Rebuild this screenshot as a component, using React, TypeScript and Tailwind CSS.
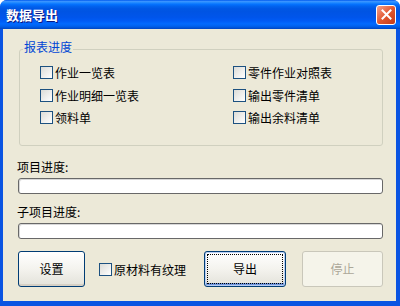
import React from 'react';

function Check({ label }: { label: string }) {
  return (
    <label className="flex items-center gap-[2px] h-[13px]">
      <span className="w-[13px] h-[13px] shrink-0 border border-[#1C5180] bg-linear-to-br from-[#DCDCD7] to-white" />
      <span className="text-[12px] leading-[13px] text-black whitespace-nowrap">{label}</span>
    </label>
  );
}

function ProgressBar() {
  return (
    <div className="h-[16px] w-[365px] rounded-[3px] border border-[#686868] bg-white shadow-[inset_1px_1px_0_#D8D8D8]" />
  );
}

export default function App() {
  return (
    <div className="w-[400px] h-[306px] flex flex-col overflow-hidden rounded-t-[7px] bg-[#0A54E2] font-['Noto_Sans_CJK_SC',sans-serif] text-[12px] text-black select-none">
      {/* title bar */}
      <div className="h-[29px] shrink-0 flex items-center justify-between bg-[linear-gradient(180deg,#0058EE_0%,#3A93FF_5%,#288EFF_8%,#127DFF_12%,#036FFC_16%,#0262EE_22%,#0057E5_30%,#0054E3_40%,#0055EB_60%,#005BF5_72%,#026AFE_82%,#0062EF_90%,#0052D6_96%,#0045C0_100%)]">
        <span className="ml-[6px] text-[13px] leading-[16px] font-bold text-white [text-shadow:1px_1px_0_#0A1883]">数据导出</span>
        <button className="mr-[4px] w-[20px] h-[20px] flex items-center justify-center rounded-[3px] border border-white bg-linear-to-br from-[#F4A08A] via-[#E2582F] to-[#C53A17]">
          <svg width="11" height="11" viewBox="0 0 11 11">
            <path d="M1.5 1.5 L9.5 9.5 M9.5 1.5 L1.5 9.5" stroke="white" strokeWidth="2" strokeLinecap="square" />
          </svg>
        </button>
      </div>

      {/* client area */}
      <div className="flex-1 ml-[3px] mr-[4px] mb-[5px] bg-[#ECE9D8] pl-[15px] flex flex-col">
        <fieldset className="mt-[11px] ml-[1px] w-[364px] rounded-[3px] border border-[#D0D0BF] pl-[20px] pt-[8px] pb-[21px]">
          <legend className="-ml-[17px] px-[1px] pb-[4px] leading-[14px] text-[12px] text-[#0046D5]">报表进度</legend>
          <div className="grid grid-cols-[193px_1fr] gap-y-[9.5px]">
            <Check label="作业一览表" />
            <Check label="零件作业对照表" />
            <Check label="作业明细一览表" />
            <Check label="输出零件清单" />
            <Check label="领料单" />
            <Check label="输出余料清单" />
          </div>
        </fieldset>

        <div className="mt-[13px] -ml-[1px] h-[16px] leading-[16px]">项目进度:</div>
        <div className="mt-[3px]">
          <ProgressBar />
        </div>
        <div className="mt-[10px] -ml-[1px] h-[16px] leading-[16px]">子项目进度:</div>
        <div className="mt-[3px]">
          <ProgressBar />
        </div>

        <div className="mt-[12px] flex items-center">
          <button className="w-[67px] h-[36px] rounded-[3px] border border-[#003C74] bg-linear-to-b from-white via-[#F4F3EE] to-[#E3E2DA] shadow-[inset_0_-2px_0_#D6D0C5]">
            设置
          </button>
          <div className="ml-[14px]">
            <Check label="原材料有纹理" />
          </div>
          <button className="ml-[18px] w-[82px] h-[36px] rounded-[3px] border border-[#003C74] bg-linear-to-b from-white via-[#F4F3EE] to-[#E3E2DA] shadow-[inset_0_0_0_1px_#B8CEF4,inset_0_-2px_0_1px_#6F95DC] outline-1 outline-dotted outline-black outline-offset-[-4px]">
            导出
          </button>
          <button className="ml-[16px] w-[81px] h-[36px] rounded-[3px] border border-[#C9C7BA] bg-[#F5F4EA] text-[#ACA899]">
            停止
          </button>
        </div>
      </div>
    </div>
  );
}
